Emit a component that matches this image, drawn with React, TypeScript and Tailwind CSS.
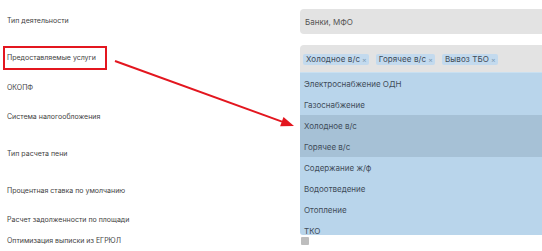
import React from "react";

const font = { fontFamily: "Inter, 'Noto Sans', sans-serif" };

function Tag({ text }: { text: string }) {
  return (
    <span className="flex items-center h-[11px] bg-[#c3daee] rounded-[2px] pl-[3px] pr-[2px] text-[8px] leading-none text-[#3d4a57] tracking-[0.1px]">
      {text}
      <span className="ml-[2px] text-[7px] text-[#7f9bb3]">×</span>
    </span>
  );
}

const items = [
  "Электроснабжение ОДН",
  "Газоснабжение",
  "Холодное в/с",
  "Горячее в/с",
  "Содержание ж/ф",
  "Водоотведение",
  "Отопление",
  "ТКО",
];

function Label({ children }: { children: React.ReactNode }) {
  return <div className="w-[300px] shrink-0 pl-[7px] text-[7px] text-[#3f3f3f]">{children}</div>;
}

export default function App() {
  return (
    <div
      className="relative w-[542px] h-[251px] overflow-hidden bg-white text-[#3a3a3a]"
      style={font}
    >
      <div className="flex flex-col pt-[9px]">
        <div className="flex h-[25px] items-center">
          <Label>Тип деятельности</Label>
          <div className="w-[260px] shrink-0 h-[25px] bg-[#e3e3e3] rounded-[4px] flex items-center pl-[5px] text-[8px] text-[#555]">
            Банки, МФО
          </div>
        </div>
        <div className="flex h-[27px] items-center mt-[11px]">
          <Label>Предоставляемые услуги</Label>
          <div className="relative w-[260px] shrink-0 h-[27px] bg-[#e3e3e3] rounded-t-[4px] flex items-center gap-[7px] pl-[3px] pt-[1px]">
            <Tag text="Холодное в/с" />
            <Tag text="Горячее в/с" />
            <Tag text="Вывоз ТБО" />
            <div className="absolute left-0 top-full w-full h-[163px] overflow-hidden rounded-bl-[3px] bg-[#b9d5eb] z-10">
              <div className="h-[1px] bg-[#c9e0f1]" />
              {items.map((it, i) => (
                <div
                  key={it}
                  className={
                    "h-[21px] flex items-center pl-[4px] text-[8px] text-[#3f4c59] " +
                    (i === 2 || i === 3 ? "bg-[#a6c1d6]" : "")
                  }
                >
                  {it}
                </div>
              ))}
            </div>
          </div>
        </div>
        <div className="flex h-[32px] items-center">
          <Label>ОКОПФ</Label>
        </div>
        <div className="flex h-[26px] items-center">
          <Label>Система налогообложения</Label>
        </div>
        <div className="flex h-[48px] items-center">
          <Label>Тип расчета пени</Label>
        </div>
        <div className="flex h-[26px] items-center">
          <Label>Процентная ставка по умолчанию</Label>
        </div>
        <div className="flex h-[32px] items-center">
          <Label>Расчет задолженности по площади</Label>
        </div>
        <div className="flex h-[10px] items-center">
          <Label>Оптимизация выписки из ЕГРЮЛ</Label>
          <div className="ml-[1px] w-[8px] h-[8px] rounded-[1px] bg-[#bdbdbd]" />
        </div>
      </div>

      <div className="absolute left-[3px] top-[46px] w-[104px] h-[24px] border-2 border-[#e3161f]" />
      <svg className="absolute left-0 top-0 z-20" width="542" height="251">
        <line x1="115" y1="61" x2="282" y2="121.6" stroke="#e3161f" strokeWidth="2" />
        <polygon points="294,126 280.1,126.3 283.5,116.9" fill="#e3161f" />
      </svg>
    </div>
  );
}
